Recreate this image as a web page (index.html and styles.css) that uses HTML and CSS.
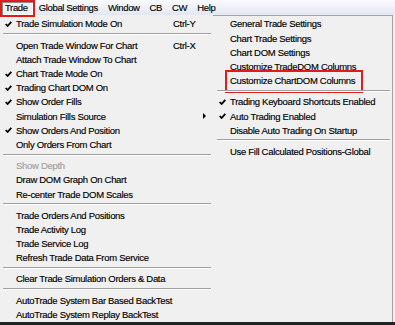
FILE: index.html
```html
<!DOCTYPE html>
<html lang="en">
<head>
    <meta charset="UTF-8">
    <title>Trade Menu</title>
    <link rel="stylesheet" href="styles.css">
</head>
<body>
    <div class="screen">
        <div class="menubar">
            <span class="top-item active">Trade</span>
            <span class="top-item">Global Settings</span>
            <span class="top-item">Window</span>
            <span class="top-item">CB</span>
            <span class="top-item">CW</span>
            <span class="top-item">Help</span>
        </div>

        <div class="menus">
            <ul class="menu main-menu">
                <li class="item"><span class="check"><svg width="7" height="6" viewBox="0 0 7 6"><polyline points="0.7,3 2.6,5 6.3,0.8"/></svg></span><span class="label">Trade Simulation Mode On</span><span class="key">Ctrl-Y</span></li>
                <li class="sep"></li>
                <li class="item"><span class="check"></span><span class="label">Open Trade Window For Chart</span><span class="key">Ctrl-X</span></li>
                <li class="item"><span class="check"></span><span class="label">Attach Trade Window To Chart</span></li>
                <li class="item"><span class="check"><svg width="7" height="6" viewBox="0 0 7 6"><polyline points="0.7,3 2.6,5 6.3,0.8"/></svg></span><span class="label">Chart Trade Mode On</span></li>
                <li class="item"><span class="check"><svg width="7" height="6" viewBox="0 0 7 6"><polyline points="0.7,3 2.6,5 6.3,0.8"/></svg></span><span class="label">Trading Chart DOM On</span></li>
                <li class="item"><span class="check"><svg width="7" height="6" viewBox="0 0 7 6"><polyline points="0.7,3 2.6,5 6.3,0.8"/></svg></span><span class="label">Show Order Fills</span></li>
                <li class="item"><span class="check"></span><span class="label">Simulation Fills Source</span><span class="arrow"></span></li>
                <li class="item"><span class="check"><svg width="7" height="6" viewBox="0 0 7 6"><polyline points="0.7,3 2.6,5 6.3,0.8"/></svg></span><span class="label">Show Orders And Position</span></li>
                <li class="item"><span class="check"></span><span class="label">Only Orders From Chart</span></li>
                <li class="sep"></li>
                <li class="item disabled"><span class="check"></span><span class="label">Show Depth</span></li>
                <li class="item"><span class="check"></span><span class="label">Draw DOM Graph On Chart</span></li>
                <li class="item"><span class="check"></span><span class="label">Re-center Trade DOM Scales</span></li>
                <li class="sep"></li>
                <li class="item"><span class="check"></span><span class="label">Trade Orders And Positions</span></li>
                <li class="item"><span class="check"></span><span class="label">Trade Activity Log</span></li>
                <li class="item"><span class="check"></span><span class="label">Trade Service Log</span></li>
                <li class="item"><span class="check"></span><span class="label">Refresh Trade Data From Service</span></li>
                <li class="sep"></li>
                <li class="item"><span class="check"></span><span class="label">Clear Trade Simulation Orders &amp; Data</span></li>
                <li class="sep"></li>
                <li class="item"><span class="check"></span><span class="label">AutoTrade System Bar Based BackTest</span></li>
                <li class="item"><span class="check"></span><span class="label">AutoTrade System Replay BackTest</span></li>
            </ul>

            <ul class="menu sub-menu">
                <li class="item"><span class="check"></span><span class="label">General Trade Settings</span></li>
                <li class="item"><span class="check"></span><span class="label">Chart Trade Settings</span></li>
                <li class="item"><span class="check"></span><span class="label">Chart DOM Settings</span></li>
                <li class="item"><span class="check"></span><span class="label">Customize TradeDOM Columns</span></li>
                <li class="item marked"><span class="check"></span><span class="label">Customize ChartDOM Columns</span></li>
                <li class="sep"></li>
                <li class="item"><span class="check"><svg width="7" height="6" viewBox="0 0 7 6"><polyline points="0.7,3 2.6,5 6.3,0.8"/></svg></span><span class="label">Trading Keyboard Shortcuts Enabled</span></li>
                <li class="item"><span class="check"><svg width="7" height="6" viewBox="0 0 7 6"><polyline points="0.7,3 2.6,5 6.3,0.8"/></svg></span><span class="label">Auto Trading Enabled</span></li>
                <li class="item"><span class="check"></span><span class="label">Disable Auto Trading On Startup</span></li>
                <li class="sep"></li>
                <li class="item"><span class="check"></span><span class="label">Use Fill Calculated Positions-Global</span></li>
            </ul>
        </div>
    </div>
</body>
</html>
```

FILE: styles.css
```css
body {
    margin: 0;
    background-color: #1d2626;
    font-family: "Liberation Sans", Arial, sans-serif;
    font-size: 9.5px;
    color: #000;
    -webkit-text-stroke: 0.15px currentColor;
}

.screen {
    width: 395px;
    height: 322px;
    background-color: #f0f0f0;
    overflow: hidden;
}

.menubar {
    display: flex;
    height: 15px;
    align-items: center;
    background: linear-gradient(#fafbfd, #e3e7f3);
    letter-spacing: -0.35px;
}

.top-item {
    padding: 0 5px;
    line-height: 15px;
}

.top-item.active {
    position: relative;
    padding-right: 6px;
    background-color: #eef0f6;
}

.top-item.active::after {
    content: "";
    position: absolute;
    left: 0;
    top: 0;
    width: 31px;
    height: 13px;
    border: 2px solid #e01b1b;
    box-shadow: inset 1px 1px 0 #8a8a8a, inset -1px -1px 0 #fff;
}

.menus {
    display: flex;
    height: 307px;
}

.menu {
    list-style: none;
    margin: 0;
    padding: 1.9px 0 0;
    box-sizing: border-box;
}

.main-menu {
    width: 213px;
}

.sub-menu {
    width: 180px;
    border-top: 1px solid #a3a3a3;
    border-right: 1px solid #a3a3a3;
    padding-top: 0.9px;
}

.item {
    display: flex;
    align-items: center;
    height: 14.2px;
    white-space: nowrap;
    position: relative;
    letter-spacing: -0.3px;
}

.check {
    flex: 0 0 16px;
    display: flex;
    align-items: center;
}

.check svg {
    margin-left: 5px;
    fill: none;
    stroke: #000;
    stroke-width: 1.8;
}

.sub-menu .check {
    flex-basis: 17px;
}

.sub-menu .check svg {
    margin-left: 6px;
}

.main-menu .label {
    flex: 0 0 157px;
}

.arrow {
    margin-left: auto;
    margin-right: 7px;
    width: 0;
    height: 0;
    border-top: 3px solid transparent;
    border-bottom: 3px solid transparent;
    border-left: 3px solid #000;
}

.disabled {
    color: #a0a0a0;
}

.sep {
    height: 7px;
    position: relative;
}

.sep::before {
    content: "";
    position: absolute;
    left: 3px;
    right: 2px;
    top: 2px;
    border-top: 1px solid #a0a0a0;
    border-bottom: 1px solid #fff;
}

.sub-menu .sep::before {
    left: 4px;
    right: 2px;
}

.marked::after {
    content: "";
    position: absolute;
    left: 12px;
    top: -3.5px;
    width: 134px;
    height: 19px;
    border: 2px solid #e01b1b;
}
```
